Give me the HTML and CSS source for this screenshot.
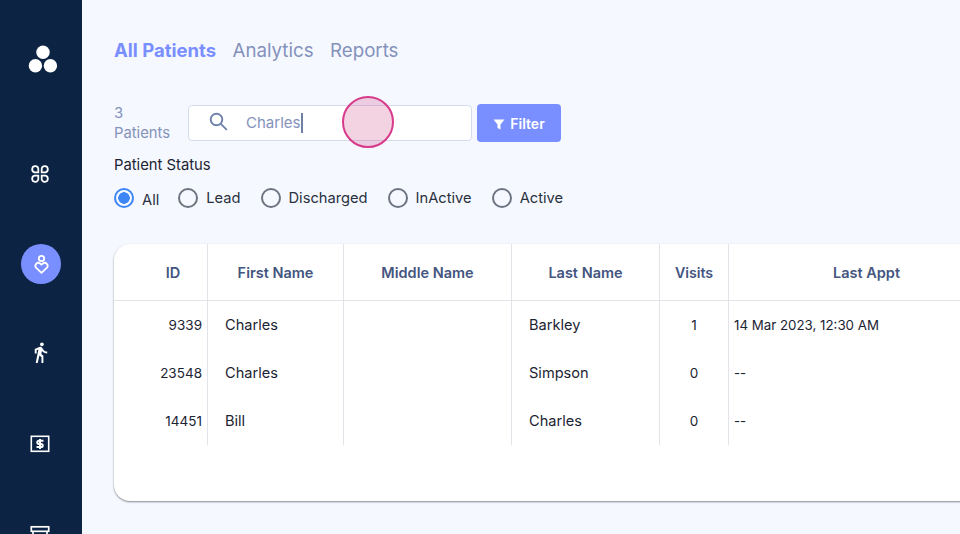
FILE: index.html
```html
<!DOCTYPE html>
<html lang="en">
<head>
<meta charset="utf-8">
<title>All Patients</title>
<link rel="stylesheet" href="styles.css">
</head>
<body>
<div class="app">
  <nav class="sidebar">
    <svg class="logo" viewBox="0 0 30 28" width="30" height="28"><circle cx="15" cy="7.2" r="6.7"/><circle cx="7.4" cy="20.8" r="6.7"/><circle cx="22.4" cy="20.8" r="6.7"/></svg>
    <div class="nav-list">
      <div class="nav-item">
        <svg viewBox="0 0 20 20" width="20" height="20" fill="none" stroke="#fff" stroke-width="1.800"><path d="M8.300 8.300H4.600a3.100 3.100 0 1 1 3.700-3.700zM11.700 8.300h3.700a3.100 3.100 0 1 0-3.700-3.700zM8.300 11.700H4.600a3.100 3.100 0 1 0 3.700 3.700zM11.700 11.700h3.700a3.100 3.100 0 1 1-3.700 3.700z"/></svg>
      </div>
      <div class="nav-item active">
        <svg viewBox="0 0 20 20" width="20" height="20" fill="none" stroke="#fff" stroke-width="1.800"><circle cx="10.500" cy="4.500" r="2.700"/><path d="M10.500 18.800L4.800 13.400a3 3 0 0 1 4-4.200l1.700 1.400 1.700-1.400a3 3 0 0 1 4 4.200z"/></svg>
      </div>
      <div class="nav-item walk">
        <svg viewBox="0 0 24 24" width="23" height="23" fill="#fff"><path d="M13.500 5.500c1.100 0 2-.9 2-2s-.9-2-2-2-2 .9-2 2 .9 2 2 2zM9.800 8.900L7 23h2.100l1.800-8 2.100 2v6h2v-7.500l-2.100-2 .6-3C14.800 12 16.800 13 19 13v-2c-1.900 0-3.500-1-4.300-2.400l-1-1.600c-.4-.6-1-1-1.700-1-.3 0-.5.100-.8.100L6 8.300V13h2V9.600l1.800-.7z"/></svg>
      </div>
      <div class="nav-item">
        <svg viewBox="0 0 20 20" width="20" height="20" fill="none" stroke="#fff"><rect x="1.300" y="2.300" width="17.400" height="15" stroke-width="1.600"/><path d="M13.500 6.800H8.800a1.500 1.500 0 0 0 0 3.100h2.400a1.500 1.500 0 0 1 0 3.100H6.500M10 5v10" stroke-width="2"/></svg>
      </div>
      <div class="nav-item">
        <svg viewBox="0 0 20 20" width="20" height="20" fill="none" stroke="#fff" stroke-width="1.700"><rect x="1.300" y="2.800" width="17.400" height="4.500"/><path d="M3 7.300V18h14V7.300M7 11h6"/></svg>
      </div>
    </div>
  </nav>
  <main class="main">
    <div class="tabs">
      <span class="tab tab-active">All Patients</span>
      <span class="tab">Analytics</span>
      <span class="tab">Reports</span>
    </div>
    <div class="search-row">
      <div class="count">3 Patients</div>
      <div class="search">
        <svg class="search-icon" viewBox="0 0 20 20" width="20" height="20" fill="none" stroke="#6f82ad" stroke-width="1.900"><circle cx="7.500" cy="7.500" r="5.800"/><path d="M11.800 11.800l6 6"/></svg>
        <span class="search-text">Charles</span><span class="caret"></span>
        <span class="touch"></span>
      </div>
      <button class="filter" type="button">
        <svg viewBox="0 0 12 12" width="12" height="12" fill="#fff"><path d="M.5 1.500h11L7.500 6.500V11.500L4.500 10V6.500z"/></svg>
        Filter
      </button>
    </div>
    <div class="status-label">Patient Status</div>
    <div class="radios">
      <label class="radio radio-on"><span class="dot"></span><span class="radio-text">All</span></label>
      <label class="radio"><span class="dot"></span><span>Lead</span></label>
      <label class="radio"><span class="dot"></span><span>Discharged</span></label>
      <label class="radio"><span class="dot"></span><span>InActive</span></label>
      <label class="radio"><span class="dot"></span><span>Active</span></label>
    </div>
    <section class="card">
      <div class="grid head">
        <div class="c id-head">ID</div><div class="c">First Name</div><div class="c">Middle Name</div><div class="c">Last Name</div><div class="c visits-head">Visits</div><div class="c">Last Appt</div>
      </div>
      <div class="grid row">
        <div class="c num">9339</div><div class="c txt">Charles</div><div class="c txt"></div><div class="c txt">Barkley</div><div class="c mid">1</div><div class="c appt">14 Mar 2023, 12:30 AM</div>
      </div>
      <div class="grid row">
        <div class="c num">23548</div><div class="c txt">Charles</div><div class="c txt"></div><div class="c txt">Simpson</div><div class="c mid">0</div><div class="c appt">--</div>
      </div>
      <div class="grid row">
        <div class="c num">14451</div><div class="c txt">Bill</div><div class="c txt"></div><div class="c txt">Charles</div><div class="c mid">0</div><div class="c appt">--</div>
      </div>
    </section>
  </main>
</div>
</body>
</html>
```

FILE: styles.css
```css
* { box-sizing: border-box; }
html, body { margin: 0; height: 100%; overflow: hidden; }
body { font-family: Inter, "Noto Sans", sans-serif; font-size: 14.6px; color: #1c2433; background: #f5f8ff; }
.app { display: flex; height: 534px; overflow: hidden; }

.sidebar { flex: 0 0 82px; background: #0c2344; display: flex; flex-direction: column; overflow: hidden; }
.logo { fill: #fff; margin: 45px 0 0 28px; flex: none; }
.nav-list { margin-top: 81px; display: flex; flex-direction: column; gap: 50px; padding-left: 20px; }
.nav-item { width: 40px; height: 40px; flex: none; border-radius: 50%; display: flex; align-items: center; justify-content: center; }
.nav-item.active { background: #7a8fff; margin-left: 1px; }
.walk svg { margin-top: -3px; }

.main { flex: 1; min-width: 0; padding: 38px 0 0 32px; }
.tabs { display: flex; gap: 16.500px; height: 24px; align-items: center; }
.tab { font-size: 18.700px; color: #8492bb; white-space: nowrap; }
.tab-active { color: #7a8fff; font-weight: 700; font-size: 18.500px; }

.search-row { display: flex; align-items: flex-start; margin-top: 42px; }
.count { width: 74px; margin-top: -1px; line-height: 20px; color: #8492bb; font-size: 14.800px; padding-right: 12px; }
.search { position: relative; margin-top: 1px; width: 284px; height: 36px; background: #fff; border: 1px solid #d5dcec; border-radius: 4px; display: flex; align-items: center; padding-left: 20px; }
.search-icon { flex: none; margin-right: 17px; margin-top: -2px; }
.search-text { color: #8492bb; font-size: 15px; padding-bottom: 2px; }
.caret { width: 2px; height: 20px; background: #6f7fa6; margin-left: 1px; }
.touch { position: absolute; left: 153px; top: -10px; width: 52px; height: 52px; border-radius: 50%; background: rgba(200, 50, 120, .22); border: 2px solid #d83a8a; }
.filter { margin-left: 5px; width: 84px; height: 38px; border: 0; border-radius: 4px; background: #7a8fff; color: #fff; font: 600 14px Inter, sans-serif; display: flex; align-items: center; justify-content: center; gap: 5px; padding: 0; }
.filter svg { margin-top: 2px; }

.status-label { margin-top: 13px; line-height: 18px; color: #1c2433; font-size: 14.800px; }
.radios { display: flex; gap: 20px; margin-top: 14px; height: 20px; font-size: 14.700px; }
.radio { display: flex; align-items: center; gap: 8px; white-space: nowrap; color: #2a3140; }
.radio-on { margin-right: -1px; }
.dot { width: 20px; height: 20px; flex: none; border-radius: 50%; border: 2px solid #6e7480; background: transparent; }
.radio-on .dot { border-color: #3d86f6; background: radial-gradient(circle, #3d86f6 0 5.500px, transparent 6px); }
.radio-text { position: relative; top: 2px; }

.card { margin-top: 36px; width: 900px; height: 257px; background: #fff; border-radius: 16px; box-shadow: 0 1px 2px rgba(0, 0, 0, .45); overflow: hidden; }
.grid { display: grid; grid-template-columns: 94px 136px 168px 148px 69px 275px; }
.head { height: 57px; border-bottom: 1px solid #e2e4ea; }
.row { height: 48px; }
.c { border-right: 1px solid #e2e4ea; display: flex; align-items: center; min-width: 0; }
.c:last-child { border-right: 0; }
.head .c { justify-content: center; font-weight: 600; font-size: 14.500px; color: #44557f; }
.head .id-head { padding-left: 25px; }
.head .visits-head { font-size: 14.200px; }
.num { justify-content: flex-end; padding-right: 5px; font-size: 13.500px; }
.txt { padding-left: 17px; }
.mid { justify-content: center; font-size: 13.500px; }
.appt { padding-left: 5px; font-size: 13.300px; }
```
